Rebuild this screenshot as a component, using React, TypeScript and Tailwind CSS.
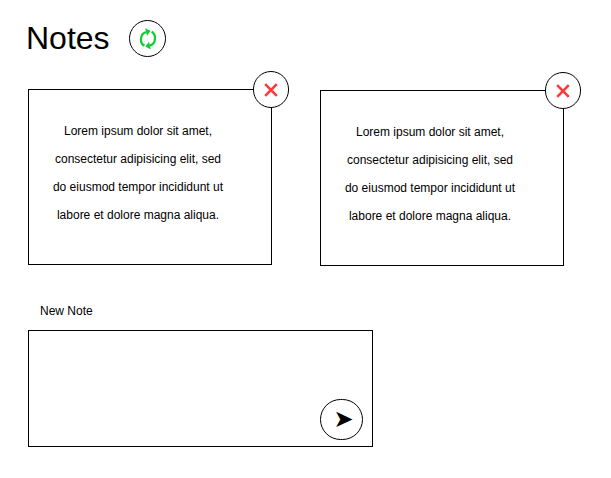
import React from "react";

const LINES = [
  "Lorem ipsum dolor sit amet,",
  "consectetur adipisicing elit, sed",
  "do eiusmod tempor incididunt ut",
  "labore et dolore magna aliqua.",
];

function RefreshIcon() {
  return (
    <svg className="h-[26px] w-[24px]" viewBox="0 0 24 26" fill="none" stroke="#11cc33" strokeWidth="2.2">
      <path d="M8.4 19.8C5.8 18.4 4.8 16 5 13C5.2 9 7.6 6.6 10.5 6" />
      <path d="M15.6 5.8C18.2 7.2 19.2 9.6 19 12.6C18.8 16.6 16.4 19 13.5 19.6" />
      <path d="M9.2 2.2L14.6 5L11 9.8Z" fill="#11cc33" stroke="none" />
      <path d="M14.8 23.4L9.4 20.6L13 15.8Z" fill="#11cc33" stroke="none" />
    </svg>
  );
}

function CrossIcon() {
  return (
    <svg className="h-[14px] w-[14px]" viewBox="0 0 14 14" fill="none" stroke="#ff3a3a" strokeWidth="2.6">
      <path d="M1.2 1.2L12.8 12.8M12.8 1.2L1.2 12.8" />
    </svg>
  );
}

function NoteCard({ className }: { className: string }) {
  return (
    <article
      className={`relative h-[176px] w-[244px] border border-black bg-white pt-[27px] pr-[24px] ${className}`}
    >
      {LINES.map((line) => (
        <p key={line} className="text-center text-[12px] leading-[28px] whitespace-nowrap">
          {line}
        </p>
      ))}
      <button
        aria-label="Delete note"
        className="absolute -top-[19px] -right-[18px] flex h-[37px] w-[36px] items-center justify-center rounded-full border border-black bg-white"
      >
        <CrossIcon />
      </button>
    </article>
  );
}

export default function App() {
  return (
    <main className="h-[478px] w-[611px] overflow-hidden bg-white font-['Liberation_Sans',Arial,sans-serif] text-black">
      <header className="flex h-[69px] items-start pt-[20px] pl-[26px]">
        <h1 className="w-[103px] text-[32px] leading-[36px]">Notes</h1>
        <button
          aria-label="Refresh notes"
          className="flex h-[37px] w-[37px] items-center justify-center rounded-full border border-black bg-white pl-px"
        >
          <RefreshIcon />
        </button>
      </header>
      <section className="flex items-start gap-[48px] pt-[20px] pl-[28px]">
        <NoteCard className="" />
        <NoteCard className="mt-px" />
      </section>
      <section className="pt-[37px] pl-[28px]">
        <label className="block pl-[12px] text-[12px] leading-[16px]">New Note</label>
        <div className="mt-[11px] flex h-[117px] w-[345px] items-end justify-end border border-black pr-[9px] pb-[6px]">
          <button
            aria-label="Add note"
            className="flex h-[41px] w-[43px] items-center justify-center rounded-full border border-black bg-white pb-[2px] pl-[4px] font-['DejaVu_Sans',sans-serif] text-[24px] leading-none"
          >
            ➤
          </button>
        </div>
      </section>
    </main>
  );
}
